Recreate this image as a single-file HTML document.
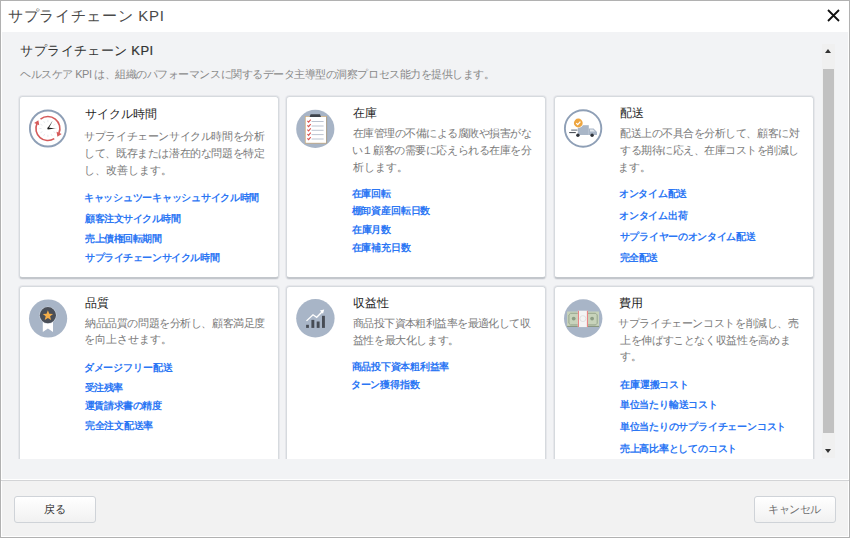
<!DOCTYPE html><html><head><meta charset="utf-8"><style>
html,body{margin:0;padding:0;}
body{width:850px;height:538px;position:relative;overflow:hidden;background:#fff;font-family:"Liberation Sans",sans-serif;}
.t{position:absolute;white-space:nowrap;}
.card{position:absolute;background:#fff;border:1px solid #d6dade;border-bottom:2px solid #c3c7cc;border-radius:3.5px;box-sizing:border-box;box-shadow:0 0 0 1px rgba(214,218,223,0.45);}
.ic{position:absolute;width:44px;height:44px;}
.btn{position:absolute;box-sizing:border-box;border:1px solid #cfd3d8;border-radius:3px;background:linear-gradient(#ffffff,#f1f1f1);}
</style></head><body>
<div style="position:absolute;left:0;top:0;width:850px;height:538px;box-sizing:border-box;border:1px solid #b1b1b1;"></div>
<div style="position:absolute;left:2px;top:32px;width:846px;height:447px;background:#f2f3f5;"></div>
<div style="position:absolute;left:1px;top:480px;width:848px;height:1px;background:#d3d4d6;"></div>
<div style="position:absolute;left:2px;top:481px;width:846px;height:55px;background:#f2f2f2;"></div>
<svg style="position:absolute;left:826px;top:8px" width="15" height="15" viewBox="0 0 15 15"><path d="M2 2 L13 13 M13 2 L2 13" stroke="#111" stroke-width="1.8"/></svg>
<div style="position:absolute;left:0;top:44px;width:822px;height:415px;overflow:hidden;">
<div class="card" style="left:19px;top:52px;width:260px;height:183px;"></div>
<div class="card" style="left:286px;top:52px;width:260px;height:183px;"></div>
<div class="card" style="left:554px;top:52px;width:260px;height:183px;"></div>
<div class="card" style="left:19px;top:242px;width:260px;height:200px;"></div>
<div class="card" style="left:286px;top:242px;width:260px;height:200px;"></div>
<div class="card" style="left:554px;top:242px;width:260px;height:200px;"></div>
<div class="ic" style="left:26px;top:62px"><svg width="44" height="44" viewBox="0 0 44 44"><circle cx="21.9" cy="22.5" r="18" fill="#fff" stroke="#8e9fb6" stroke-width="1.9"/><line x1="28.20" y1="22.50" x2="30.50" y2="22.50" stroke="#dfe4ea" stroke-width="0.8"/><line x1="27.36" y1="25.65" x2="29.35" y2="26.80" stroke="#dfe4ea" stroke-width="0.8"/><line x1="25.05" y1="27.96" x2="26.20" y2="29.95" stroke="#dfe4ea" stroke-width="0.8"/><line x1="21.90" y1="28.80" x2="21.90" y2="31.10" stroke="#dfe4ea" stroke-width="0.8"/><line x1="18.75" y1="27.96" x2="17.60" y2="29.95" stroke="#dfe4ea" stroke-width="0.8"/><line x1="16.44" y1="25.65" x2="14.45" y2="26.80" stroke="#dfe4ea" stroke-width="0.8"/><line x1="15.60" y1="22.50" x2="13.30" y2="22.50" stroke="#dfe4ea" stroke-width="0.8"/><line x1="16.44" y1="19.35" x2="14.45" y2="18.20" stroke="#dfe4ea" stroke-width="0.8"/><line x1="18.75" y1="17.04" x2="17.60" y2="15.05" stroke="#dfe4ea" stroke-width="0.8"/><line x1="21.90" y1="16.20" x2="21.90" y2="13.90" stroke="#dfe4ea" stroke-width="0.8"/><line x1="25.05" y1="17.04" x2="26.20" y2="15.05" stroke="#dfe4ea" stroke-width="0.8"/><line x1="27.36" y1="19.35" x2="29.35" y2="18.20" stroke="#dfe4ea" stroke-width="0.8"/><path d="M14.51 13.04 A12 12 0 0 1 32.86 27.38" fill="none" stroke="#d55a5a" stroke-width="1.6"/><path d="M31.40 30.67 L35.66 27.97 L30.55 25.69 Z" fill="#d55a5a"/><path d="M28.26 32.68 A12 12 0 0 1 10.94 17.62" fill="none" stroke="#d55a5a" stroke-width="1.6"/><path d="M12.40 14.33 L8.14 17.03 L13.25 19.31 Z" fill="#d55a5a"/><path d="M20.9 22.9 L22.9 22.1 L26.6 15.0 Z" fill="#1e1e1e"/><path d="M21.6 21.6 L21.6 23.4 L29.2 22.4 Z" fill="#1e1e1e"/></svg></div>
<div class="ic" style="left:293px;top:63px"><svg width="44" height="44" viewBox="0 0 44 44"><circle cx="22.3" cy="21.9" r="19.1" fill="#a7b4c6"/><rect x="11.9" y="9" width="22" height="27.6" fill="#c9ab7e"/><rect x="12.7" y="9.8" width="20.4" height="26" fill="#fff"/><rect x="33.3" y="10" width="0.9" height="26.6" fill="#8a8f98" opacity="0.6"/><path d="M16.6 9.9 L17.6 7.2 L27 7.2 L28 9.9 Z" fill="#3e434b"/><path d="M14.4 13.9 l1.2 1.3 l2.1 -2.6" fill="none" stroke="#d9534f" stroke-width="1.1"/><line x1="18.6" y1="14.5" x2="30.6" y2="14.5" stroke="#a9b4c4" stroke-width="0.8"/><path d="M14.4 18.4 l1.2 1.3 l2.1 -2.6" fill="none" stroke="#d9534f" stroke-width="1.1"/><line x1="18.6" y1="19.0" x2="30.6" y2="19.0" stroke="#a9b4c4" stroke-width="0.8"/><path d="M14.4 22.7 l1.2 1.3 l2.1 -2.6" fill="none" stroke="#d9534f" stroke-width="1.1"/><line x1="18.6" y1="23.3" x2="30.6" y2="23.3" stroke="#a9b4c4" stroke-width="0.8"/><path d="M14.4 27.0 l1.2 1.3 l2.1 -2.6" fill="none" stroke="#d9534f" stroke-width="1.1"/><line x1="18.6" y1="27.6" x2="30.6" y2="27.6" stroke="#a9b4c4" stroke-width="0.8"/><path d="M14.4 31.4 l1.2 1.3 l2.1 -2.6" fill="none" stroke="#d9534f" stroke-width="1.1"/><line x1="18.6" y1="32.0" x2="30.6" y2="32.0" stroke="#a9b4c4" stroke-width="0.8"/></svg></div>
<div class="ic" style="left:561px;top:62px"><svg width="44" height="44" viewBox="0 0 44 44"><circle cx="22.1" cy="22.5" r="18.2" fill="#fff" stroke="#8e9fb6" stroke-width="1.9"/><rect x="16.8" y="19.2" width="11" height="9.8" fill="#a9b6c7"/><path d="M27.8 22.4 L32.6 22.4 L36 26 L36 29 L27.8 29 Z" fill="#a9b6c7"/><path d="M29 23.4 L32 23.4 L34 25.6 L29 25.6 Z" fill="#e3e8ee"/><circle cx="16.9" cy="29.3" r="1.7" fill="#2f333a"/><circle cx="31.1" cy="29.3" r="1.7" fill="#2f333a"/><line x1="10.2" y1="24.1" x2="16.4" y2="24.1" stroke="#5c6470" stroke-width="1"/><line x1="8.2" y1="26.6" x2="14.8" y2="26.6" stroke="#3c424a" stroke-width="1"/><circle cx="17.3" cy="17" r="5.1" fill="#fff"/><circle cx="17.3" cy="17" r="4.4" fill="#eea640"/><path d="M15.2 17.1 L16.7 18.6 L19.4 15.6" fill="none" stroke="#fff" stroke-width="1.3"/></svg></div>
<div class="ic" style="left:26px;top:252px"><svg width="44" height="44" viewBox="0 0 44 44"><circle cx="22.1" cy="22.5" r="19.1" fill="#a8b5c7"/><path d="M16.8 26 L27 26 L27 36 L21.9 32.6 L16.8 36 Z" fill="#fff"/><circle cx="21.9" cy="19.2" r="8.6" fill="#cfd6df"/><circle cx="21.9" cy="19.2" r="8.1" fill="#4a4f58"/><polygon points="21.90,14.20 23.25,17.74 27.04,17.93 24.09,20.31 25.07,23.97 21.90,21.90 18.73,23.97 19.71,20.31 16.76,17.93 20.55,17.74" fill="#f4ae4a"/></svg></div>
<div class="ic" style="left:293px;top:252px"><svg width="44" height="44" viewBox="0 0 44 44"><circle cx="22.4" cy="22.3" r="19.2" fill="#a8b5c7"/><rect x="13.1" y="28.8" width="2.8" height="3.1" fill="#474c55"/><rect x="18.4" y="23.9" width="2.9" height="8.0" fill="#474c55"/><rect x="23.7" y="25.5" width="2.9" height="6.4" fill="#474c55"/><rect x="29" y="19.8" width="2.9" height="12.1" fill="#474c55"/><path d="M13.5 24.9 L20 18.8 L23.7 21.3 L29.2 15.8" fill="none" stroke="#fff" stroke-width="1.3"/><path d="M31.2 13.4 L26.8 14.6 L30 17.8 Z" fill="#fff"/></svg></div>
<div class="ic" style="left:561px;top:252px"><svg width="44" height="44" viewBox="0 0 44 44"><circle cx="22.2" cy="22.5" r="19.2" fill="#a8b5c7"/><rect x="6.1" y="15.5" width="31.9" height="15.2" fill="#c8d3bb"/><rect x="6.1" y="29.9" width="31.9" height="0.9" fill="#7d8a74"/><path d="M9.5 17.3 L34.6 17.3 L36.2 18.9 L36.2 27.3 L34.6 28.9 L9.5 28.9 L7.9 27.3 L7.9 18.9 Z" fill="none" stroke="#8b9b82" stroke-width="0.8"/><circle cx="12.7" cy="22.6" r="1.9" fill="#8d9d84"/><circle cx="31.1" cy="22.6" r="1.9" fill="#8d9d84"/><rect x="16.8" y="14.7" width="10.2" height="16.4" fill="#f4f4f4"/><rect x="16.9" y="14.7" width="1" height="16.4" fill="#e77b7b"/><rect x="25.9" y="14.7" width="1" height="16.4" fill="#e77b7b"/><circle cx="21.9" cy="22.6" r="3" fill="none" stroke="#d8d8d8" stroke-width="0.7"/></svg></div>
<div class="t" id="t0" style="left:85.00px;top:63.80px;font-size:12px;line-height:12px;color:#252525;font-weight:normal;letter-spacing:0.080px;">サイクル時間</div>
<div class="t" id="t1" style="left:84.20px;top:86.60px;font-size:11px;line-height:11px;color:#7a7a7a;font-weight:normal;letter-spacing:-0.406px;">サプライチェーンサイクル時間を分析</div>
<div class="t" id="t2" style="left:84.20px;top:103.80px;font-size:11px;line-height:11px;color:#7a7a7a;font-weight:normal;letter-spacing:-0.406px;">して、既存または潜在的な問題を特定</div>
<div class="t" id="t3" style="left:84.20px;top:121.40px;font-size:11px;line-height:11px;color:#7a7a7a;font-weight:normal;letter-spacing:0.000px;">し、改善します。</div>
<div class="t" id="t4" style="left:84.00px;top:149.30px;font-size:10px;line-height:10px;color:#2b76f4;font-weight:bold;letter-spacing:-0.265px;">キャッシュツーキャッシュサイクル時間</div>
<div class="t" id="t5" style="left:85.00px;top:169.90px;font-size:10px;line-height:10px;color:#2b76f4;font-weight:bold;letter-spacing:-0.500px;">顧客注文サイクル時間</div>
<div class="t" id="t6" style="left:85.00px;top:190.30px;font-size:10px;line-height:10px;color:#2b76f4;font-weight:bold;letter-spacing:-0.500px;">売上債権回転期間</div>
<div class="t" id="t7" style="left:85.00px;top:208.50px;font-size:10px;line-height:10px;color:#2b76f4;font-weight:bold;letter-spacing:-0.423px;">サプライチェーンサイクル時間</div>
<div class="t" id="t8" style="left:352.60px;top:62.60px;font-size:12px;line-height:12px;color:#252525;font-weight:normal;letter-spacing:0.000px;">在庫</div>
<div class="t" id="t9" style="left:352.80px;top:84.00px;font-size:11px;line-height:11px;color:#7a7a7a;font-weight:normal;letter-spacing:-0.513px;">在庫管理の不備による腐敗や損害がな</div>
<div class="t" id="t10" style="left:351.80px;top:100.80px;font-size:11px;line-height:11px;color:#7a7a7a;font-weight:normal;letter-spacing:-0.424px;">い１顧客の需要に応えられる在庫を分</div>
<div class="t" id="t11" style="left:352.80px;top:118.20px;font-size:11px;line-height:11px;color:#7a7a7a;font-weight:normal;letter-spacing:0.000px;">析します。</div>
<div class="t" id="t12" style="left:351.60px;top:145.30px;font-size:10px;line-height:10px;color:#2b76f4;font-weight:bold;letter-spacing:-0.266px;">在庫回転</div>
<div class="t" id="t13" style="left:351.60px;top:162.30px;font-size:10px;line-height:10px;color:#2b76f4;font-weight:bold;letter-spacing:-0.172px;">棚卸資産回転日数</div>
<div class="t" id="t14" style="left:351.60px;top:180.50px;font-size:10px;line-height:10px;color:#2b76f4;font-weight:bold;letter-spacing:-0.067px;">在庫月数</div>
<div class="t" id="t15" style="left:351.60px;top:198.90px;font-size:10px;line-height:10px;color:#2b76f4;font-weight:bold;letter-spacing:-0.200px;">在庫補充日数</div>
<div class="t" id="t16" style="left:619.80px;top:62.80px;font-size:12px;line-height:12px;color:#252525;font-weight:normal;letter-spacing:0.000px;">配送</div>
<div class="t" id="t17" style="left:620.00px;top:83.80px;font-size:11px;line-height:11px;color:#7a7a7a;font-weight:normal;letter-spacing:-0.461px;">配送上の不具合を分析して、顧客に対</div>
<div class="t" id="t18" style="left:620.00px;top:100.80px;font-size:11px;line-height:11px;color:#7a7a7a;font-weight:normal;letter-spacing:-0.494px;">する期待に応え、在庫コストを削減し</div>
<div class="t" id="t19" style="left:618.00px;top:117.90px;font-size:11px;line-height:11px;color:#7a7a7a;font-weight:normal;letter-spacing:0.000px;">ます。</div>
<div class="t" id="t20" style="left:618.80px;top:145.40px;font-size:10px;line-height:10px;color:#2b76f4;font-weight:bold;letter-spacing:-0.217px;">オンタイム配送</div>
<div class="t" id="t21" style="left:618.80px;top:166.90px;font-size:10px;line-height:10px;color:#2b76f4;font-weight:bold;letter-spacing:-0.116px;">オンタイム出荷</div>
<div class="t" id="t22" style="left:619.80px;top:188.30px;font-size:10px;line-height:10px;color:#2b76f4;font-weight:bold;letter-spacing:-0.323px;">サプライヤーのオンタイム配送</div>
<div class="t" id="t23" style="left:619.80px;top:208.90px;font-size:10px;line-height:10px;color:#2b76f4;font-weight:bold;letter-spacing:-0.533px;">完全配送</div>
<div class="t" id="t24" style="left:84.80px;top:252.80px;font-size:12px;line-height:12px;color:#252525;font-weight:normal;letter-spacing:0.000px;">品質</div>
<div class="t" id="t25" style="left:85.00px;top:274.20px;font-size:11px;line-height:11px;color:#7a7a7a;font-weight:normal;letter-spacing:-0.412px;">納品品質の問題を分析し、顧客満足度</div>
<div class="t" id="t26" style="left:84.00px;top:290.00px;font-size:11px;line-height:11px;color:#7a7a7a;font-weight:normal;letter-spacing:0.000px;">を向上させます。</div>
<div class="t" id="t27" style="left:83.80px;top:318.60px;font-size:10px;line-height:10px;color:#2b76f4;font-weight:bold;letter-spacing:-0.150px;">ダメージフリー配送</div>
<div class="t" id="t28" style="left:84.80px;top:339.40px;font-size:10px;line-height:10px;color:#2b76f4;font-weight:bold;letter-spacing:-0.533px;">受注残率</div>
<div class="t" id="t29" style="left:84.80px;top:357.30px;font-size:10px;line-height:10px;color:#2b76f4;font-weight:bold;letter-spacing:-0.428px;">運賃請求書の精度</div>
<div class="t" id="t30" style="left:84.80px;top:377.30px;font-size:10px;line-height:10px;color:#2b76f4;font-weight:bold;letter-spacing:-0.250px;">完全注文配送率</div>
<div class="t" id="t31" style="left:352.60px;top:253.40px;font-size:12px;line-height:12px;color:#252525;font-weight:normal;letter-spacing:0.000px;">収益性</div>
<div class="t" id="t32" style="left:352.80px;top:274.00px;font-size:11px;line-height:11px;color:#7a7a7a;font-weight:normal;letter-spacing:-0.569px;">商品投下資本粗利益率を最適化して収</div>
<div class="t" id="t33" style="left:352.80px;top:291.20px;font-size:11px;line-height:11px;color:#7a7a7a;font-weight:normal;letter-spacing:-0.410px;">益性を最大化します。</div>
<div class="t" id="t34" style="left:351.60px;top:317.50px;font-size:10px;line-height:10px;color:#2b76f4;font-weight:bold;letter-spacing:-0.245px;">商品投下資本粗利益率</div>
<div class="t" id="t35" style="left:350.60px;top:336.40px;font-size:10px;line-height:10px;color:#2b76f4;font-weight:bold;letter-spacing:-0.050px;">ターン獲得指数</div>
<div class="t" id="t36" style="left:618.80px;top:252.80px;font-size:12px;line-height:12px;color:#252525;font-weight:normal;letter-spacing:0.000px;">費用</div>
<div class="t" id="t37" style="left:618.00px;top:273.60px;font-size:11px;line-height:11px;color:#7a7a7a;font-weight:normal;letter-spacing:-0.369px;">サプライチェーンコストを削減し、売</div>
<div class="t" id="t38" style="left:620.00px;top:290.80px;font-size:11px;line-height:11px;color:#7a7a7a;font-weight:normal;letter-spacing:-0.360px;">上を伸ばすことなく収益性を高めま</div>
<div class="t" id="t39" style="left:620.00px;top:307.30px;font-size:11px;line-height:11px;color:#7a7a7a;font-weight:normal;letter-spacing:0.000px;">す。</div>
<div class="t" id="t40" style="left:619.80px;top:336.10px;font-size:10px;line-height:10px;color:#2b76f4;font-weight:bold;letter-spacing:-0.083px;">在庫運搬コスト</div>
<div class="t" id="t41" style="left:619.80px;top:356.40px;font-size:10px;line-height:10px;color:#2b76f4;font-weight:bold;letter-spacing:-0.200px;">単位当たり輸送コスト</div>
<div class="t" id="t42" style="left:619.80px;top:378.30px;font-size:10px;line-height:10px;color:#2b76f4;font-weight:bold;letter-spacing:-0.219px;">単位当たりのサプライチェーンコスト</div>
<div class="t" id="t43" style="left:619.80px;top:399.70px;font-size:10px;line-height:10px;color:#2b76f4;font-weight:bold;letter-spacing:-0.227px;">売上高比率としてのコスト</div>
</div>
<div style="position:absolute;left:822px;top:44px;width:13px;height:414px;background:#f0f0f0;"></div>
<div style="position:absolute;left:823px;top:69px;width:11px;height:364px;background:#c1c1c1;"></div>
<div style="position:absolute;left:825px;top:49px;width:0;height:0;border-left:3.5px solid transparent;border-right:3.5px solid transparent;border-bottom:4px solid #333;"></div>
<div style="position:absolute;left:825px;top:449px;width:0;height:0;border-left:3.5px solid transparent;border-right:3.5px solid transparent;border-top:4px solid #333;"></div>
<div class="btn" style="left:14px;top:496px;width:82px;height:27px;"></div>
<div class="btn" style="left:754px;top:496px;width:82px;height:27px;"></div>
<div class="t" id="t44" style="left:8.00px;top:8.20px;font-size:15px;line-height:15px;color:#4a4a4a;font-weight:normal;letter-spacing:0.682px;">サプライチェーン KPI</div>
<div class="t" id="t45" style="left:20.40px;top:43.80px;font-size:13px;line-height:13px;color:#333;font-weight:normal;letter-spacing:0.372px;">サプライチェーン <span style="-webkit-text-stroke:0.2px #333">KPI</span></div>
<div class="t" id="t46" style="left:20.00px;top:69.00px;font-size:11px;line-height:11px;color:#888;font-weight:normal;letter-spacing:-0.468px;">ヘルスケア KPI は、組織のパフォーマンスに関するデータ主導型の洞察プロセス能力を提供します。</div>
<div class="t" id="t47" style="left:44.40px;top:504.00px;font-size:11px;line-height:11px;color:#333;font-weight:normal;letter-spacing:0.000px;">戻る</div>
<div class="t" id="t48" style="left:768.00px;top:504.00px;font-size:11px;line-height:11px;color:#707070;font-weight:normal;letter-spacing:-0.500px;">キャンセル</div>
</body></html>
